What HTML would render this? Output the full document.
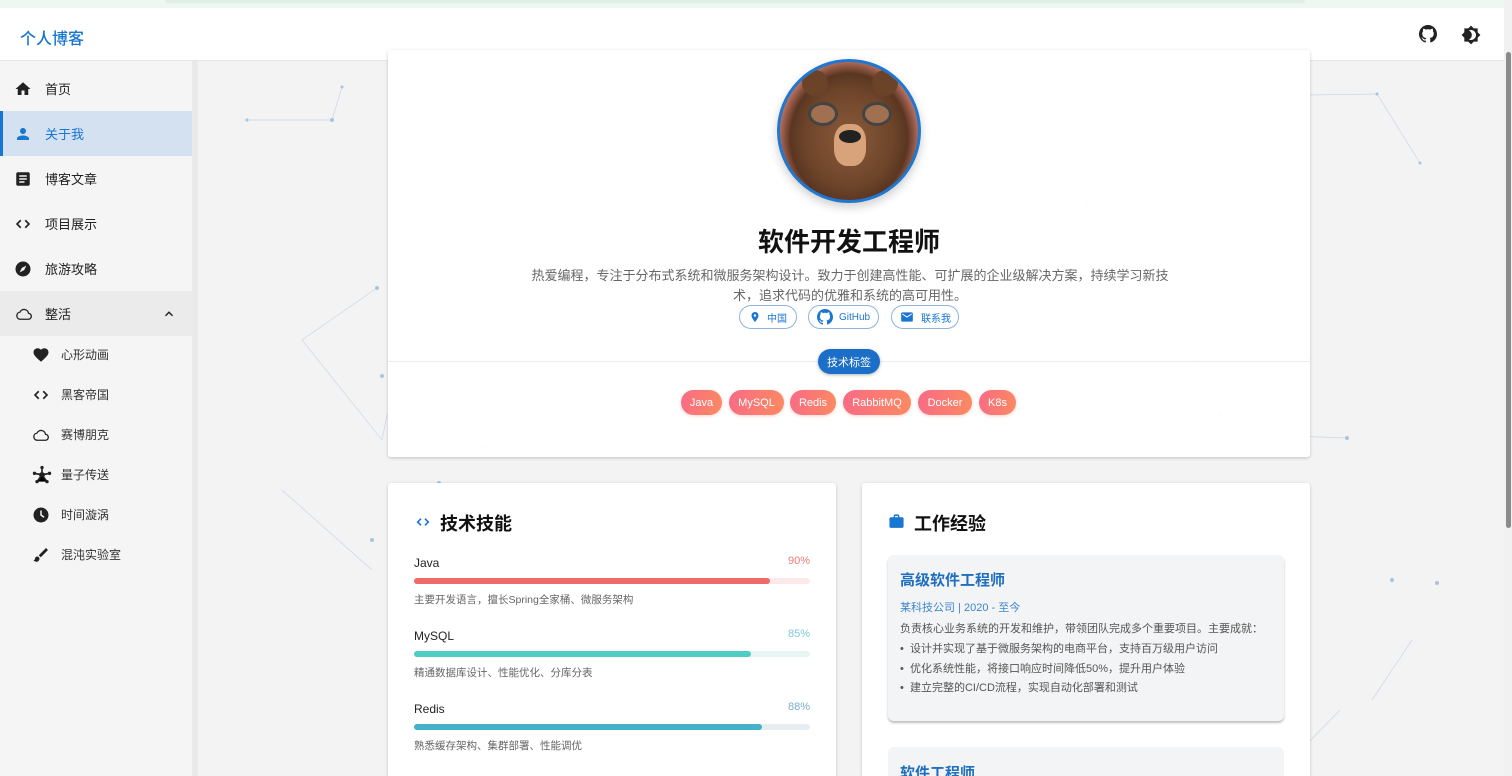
<!DOCTYPE html>
<html style="overflow:hidden;height:776px"><head><meta charset="utf-8"><style>
*{box-sizing:border-box;margin:0;padding:0}
html,body{overflow:hidden}
body{width:1512px;height:776px;overflow:hidden;background:#f3f3f4;font-family:"Liberation Sans","Noto Sans CJK SC",sans-serif;position:relative;color:#222}
.abs{position:absolute}
.top{left:0;top:0;width:1512px;height:8px;background:#eef8f2}
.top i{position:absolute;left:165px;top:0;width:1140px;height:3px;background:#dfeee6;border-radius:0 0 4px 4px}
.hdr{left:0;top:8px;width:1504px;height:53px;background:#fff;border-bottom:1px solid #e6e6e6}
.logo{left:20px;top:25px;font-size:16px;color:#1976d2;font-weight:500}
.side{left:0;top:61px;height:715px;background:#f5f5f5;border-right:6px solid #e9e9e9;width:198px}
.it{position:absolute;left:0;width:192px;height:45px;display:flex;align-items:center;font-size:13px;color:#222}
.it svg{position:absolute;left:14px}
.it span{position:absolute;left:45px}
.sub svg{left:32px}.sub span{left:61px;font-size:12px;color:#333}
.card{background:#fff;box-shadow:0 1px 3px rgba(0,0,0,.2);border-radius:3px}
.chip{position:absolute;top:305px;height:24px;border:1px solid #90b4dc;border-radius:12px;font-size:10px;color:#1976d2;display:flex;align-items:center;justify-content:center;gap:6px}
.tag{position:absolute;top:390px;height:25px;border-radius:13px;background:linear-gradient(100deg,#f86b86,#fb8a60);color:#fff;font-size:11px;display:flex;align-items:center;justify-content:center;box-shadow:0 1px 3px rgba(250,100,100,.3)}
.sk{position:absolute;left:414px;width:396px}
.sk .n{position:absolute;top:0;font-size:12px;color:#222}
.sk .p{position:absolute;right:0;top:-1px;font-size:11px}
.sk .b{position:absolute;top:22px;left:0;width:396px;height:6px;border-radius:3px}
.sk .b i{display:block;height:6px;border-radius:3px}
.sk .d{position:absolute;top:36px;font-size:10.5px;color:#666}
.exp{left:888px;top:555px;width:396px;height:166px;background:#f3f4f5;border-radius:6px;box-shadow:0 2px 2px rgba(0,0,0,.25)}
</style></head><body>
<svg class="abs" style="left:192px;top:60px" width="1312" height="716">
<g stroke="#c9d7e6" stroke-width="0.7" fill="none">
<path d="M55 60 L140 60 L150 27 M375 117 L425 82 L395 170 Z M185 228 L110 280 L190 380 L195 355 L245 330 M890 98 L1115 35 L1185 34 L1228 103 M950 160 L1088 28 M1005 300 L1030 350 L1070 375 L1155 378 M1025 355 L1065 370 M90 430 L180 510 M455 457 L530 457 L560 485 M520 520 L455 515 M1148 650 L1080 720 M1220 580 L1180 640"/>
</g>
<g fill="#a9c4e0">
<circle cx="55" cy="60" r="1.5"/><circle cx="140" cy="60" r="2"/><circle cx="150" cy="27" r="1.5"/><circle cx="375" cy="117" r="1.5"/><circle cx="425" cy="82" r="1.5"/><circle cx="185" cy="228" r="2"/><circle cx="190" cy="316" r="2"/><circle cx="247" cy="423" r="2"/><circle cx="291" cy="387" r="2"/><circle cx="570" cy="60" r="2"/><circle cx="890" cy="98" r="1.5"/><circle cx="1115" cy="35" r="2"/><circle cx="1185" cy="34" r="1.5"/><circle cx="1228" cy="103" r="1.5"/><circle cx="895" cy="145" r="2"/><circle cx="1113" cy="293" r="2"/><circle cx="1027" cy="354" r="2"/><circle cx="1155" cy="378" r="2"/><circle cx="780" cy="380" r="2"/><circle cx="180" cy="480" r="2"/><circle cx="1245" cy="523" r="2"/><circle cx="900" cy="580" r="2"/><circle cx="1200" cy="520" r="2"/>
</g></svg>
<div class="abs top"><i></i></div>
<div class="abs hdr"></div>
<div class="abs logo">个人博客</div>
<svg class="abs" style="left:1419px;top:25px" width="18" height="18" viewBox="0 0 16 16"><path fill="#222" d="M8 0C3.6 0 0 3.6 0 8c0 3.5 2.3 6.5 5.5 7.6.4.1.5-.2.5-.4v-1.4c-2.2.5-2.7-1-2.7-1-.4-.9-.9-1.2-.9-1.2-.7-.5.1-.5.1-.5.8.1 1.200.8 1.200.8.7 1.200 1.900.9 2.300.7.1-.5.3-.9.5-1.100-1.800-.2-3.600-.9-3.600-4 0-.9.3-1.600.8-2.100-.1-.2-.4-1 .1-2.100 0 0 .7-.2 2.200.8.6-.2 1.300-.3 2-.3s1.400.1 2 .3c1.500-1 2.200-.8 2.200-.8.4 1.100.2 1.900.1 2.100.5.6.8 1.300.8 2.100 0 3.100-1.900 3.700-3.600 3.900.3.3.5.8.5 1.500v2.200c0 .2.1.5.6.4C13.700 14.500 16 11.500 16 8c0-4.400-3.600-8-8-8z"/></svg>
<svg class="abs" style="left:1461px;top:25px" width="20" height="20" viewBox="0 0 24 24"><path fill="#222" d="M20 8.7V4h-4.7L12 .7 8.7 4H4v4.7L.7 12 4 15.3V20h4.7l3.3 3.3 3.3-3.3H20v-4.7l3.3-3.3L20 8.7zM12 18c-.9 0-1.8-.2-2.5-.6 2-.9 3.5-3 3.5-5.4s-1.5-4.5-3.5-5.4C10.2 6.2 11.1 6 12 6c3.3 0 6 2.7 6 6s-2.7 6-6 6z"/></svg>
<div class="abs" style="left:1504px;top:0;width:8px;height:776px;background:#f1f1f1"></div>
<div class="abs" style="left:1506px;top:52px;width:5px;height:476px;background:#8a8a8a;border-radius:3px"></div>

<div class="abs side"></div>
<div class="abs" style="left:0;top:61px;width:192px;height:715px">
<div class="it" style="top:5px"><svg width="18" height="18" viewBox="0 0 24 24"><path fill="#222" d="M10 20v-6h4v6h5v-8h3L12 3 2 12h3v8z"/></svg><span>首页</span></div>
<div class="it" style="top:50px;background:#d3e1f0;border-left:3px solid #1976d2;color:#1976d2"><svg width="18" height="18" viewBox="0 0 24 24" style="left:11px"><path fill="#1976d2" d="M12 12c2.2 0 4-1.8 4-4s-1.8-4-4-4-4 1.8-4 4 1.8 4 4 4zm0 2c-2.7 0-8 1.3-8 4v2h16v-2c0-2.7-5.3-4-8-4z"/></svg><span style="left:42px">关于我</span></div>
<div class="it" style="top:95px"><svg width="18" height="18" viewBox="0 0 24 24"><path fill="#222" d="M19 3H5c-1.1 0-2 .9-2 2v14c0 1.1.9 2 2 2h14c1.1 0 2-.9 2-2V5c0-1.1-.9-2-2-2zm-5 14H7v-2h7v2zm3-4H7v-2h10v2zm0-4H7V7h10v2z"/></svg><span>博客文章</span></div>
<div class="it" style="top:140px"><svg width="18" height="18" viewBox="0 0 24 24"><path fill="none" stroke="#222" stroke-width="2.2" d="M9 7l-5 5 5 5M15 7l5 5-5 5"/></svg><span>项目展示</span></div>
<div class="it" style="top:185px"><svg width="18" height="18" viewBox="0 0 24 24"><circle cx="12" cy="12" r="10" fill="#222"/><path fill="#f5f5f5" d="M16.5 7.5l-6 3-3 6 6-3z"/></svg><span>旅游攻略</span></div>
<div class="it" style="top:230px;background:#ebebeb"><svg width="20" height="18" viewBox="0 0 24 24"><path fill="none" stroke="#222" stroke-width="1.8" d="M6.5 19h11a4 4 0 0 0 .5-8A6 6 0 0 0 6.6 9.5 4.8 4.8 0 0 0 6.5 19z"/></svg><span>整活</span><svg width="14" height="14" viewBox="0 0 24 24" style="left:162px"><path fill="none" stroke="#222" stroke-width="2.5" d="M6 15l6-6 6 6"/></svg></div>
<div class="it sub" style="top:271px"><svg width="18" height="18" viewBox="0 0 24 24"><path fill="#222" d="M12 21l-1.5-1.3C5.4 15.1 2 12.1 2 8.4 2 5.4 4.4 3 7.4 3c1.7 0 3.4.8 4.6 2.1C13.2 3.8 14.9 3 16.6 3 19.6 3 22 5.4 22 8.4c0 3.7-3.4 6.7-8.5 11.3z"/></svg><span>心形动画</span></div>
<div class="it sub" style="top:311px"><svg width="18" height="18" viewBox="0 0 24 24"><path fill="none" stroke="#222" stroke-width="2.2" d="M9 7l-5 5 5 5M15 7l5 5-5 5"/></svg><span>黑客帝国</span></div>
<div class="it sub" style="top:351px"><svg width="20" height="18" viewBox="0 0 24 24" style="left:31px"><path fill="none" stroke="#222" stroke-width="1.8" d="M6.5 19h11a4 4 0 0 0 .5-8A6 6 0 0 0 6.6 9.5 4.8 4.8 0 0 0 6.5 19z"/></svg><span>赛博朋克</span></div>
<div class="it sub" style="top:391px"><svg width="20" height="20" viewBox="0 0 24 24"><g fill="#222"><circle cx="12" cy="12" r="3.5"/><circle cx="12" cy="3" r="2"/><circle cx="3" cy="10" r="2"/><circle cx="21" cy="10" r="2"/><circle cx="6" cy="20" r="2"/><circle cx="18" cy="20" r="2"/></g><path stroke="#222" stroke-width="2" d="M12 3v9M3 10l9 2 9-2M6 20l6-8 6 8"/></svg><span>量子传送</span></div>
<div class="it sub" style="top:431px"><svg width="18" height="18" viewBox="0 0 24 24"><circle cx="12" cy="12" r="10" fill="#222"/><path fill="none" stroke="#f5f5f5" stroke-width="2" d="M12 6v6l4 3"/></svg><span>时间漩涡</span></div>
<div class="it sub" style="top:471px"><svg width="18" height="18" viewBox="0 0 24 24"><path fill="#222" d="M20.7 4.6l-1.3-1.3c-.4-.4-1-.4-1.4 0L9 12.3l2.7 2.7 9-9c.4-.4.4-1 0-1.4zM7 14c-1.7 0-3 1.3-3 3 0 1.3-1.2 2-2 2 .9 1.2 2.5 2 4 2 2.2 0 4-1.8 4-4 0-1.7-1.3-3-3-3z"/></svg><span>混沌实验室</span></div>
</div>

<div class="abs card" style="left:388px;top:50px;width:922px;height:407px;background:rgba(255,255,255,.97)"></div>
<div class="abs" style="left:388px;top:361px;width:922px;height:1px;background:#ececec"></div>
<div class="abs" style="left:777px;top:59px;width:144px;height:144px;border-radius:50%;border:3px solid #1f77d0;background:radial-gradient(ellipse at 50% 55%,#8a5a3a 0,#6e452a 45%,#5a3622 60%,#b87060 72%,#efe2d6 80%);box-shadow:0 4px 10px rgba(0,0,0,.2);overflow:hidden">
<div style="position:absolute;left:22px;top:8px;width:26px;height:26px;background:#6b4329;border-radius:50%"></div>
<div style="position:absolute;left:92px;top:8px;width:26px;height:26px;background:#6b4329;border-radius:50%"></div>
<div style="position:absolute;left:28px;top:40px;width:30px;height:24px;border:3px solid #444;border-radius:50%;background:#a07050"></div>
<div style="position:absolute;left:82px;top:40px;width:30px;height:24px;border:3px solid #444;border-radius:50%;background:#a07050"></div>
<div style="position:absolute;left:54px;top:62px;width:32px;height:42px;background:#d8a37a;border-radius:40%"></div>
<div style="position:absolute;left:59px;top:68px;width:22px;height:13px;background:#222;border-radius:50%"></div>
</div>
<div class="abs" style="left:388px;top:222px;width:922px;text-align:center;font-size:26px;font-weight:bold;color:#111">软件开发工程师</div>
<div class="abs" style="left:530px;top:266px;width:640px;text-align:center;font-size:13px;line-height:20px;color:#666">热爱编程，专注于分布式系统和微服务架构设计。致力于创建高性能、可扩展的企业级解决方案，持续学习新技术，追求代码的优雅和系统的高可用性。</div>
<div class="chip" style="left:739px;width:58px"><svg width="12" height="14" viewBox="0 0 24 24"><path fill="#1976d2" d="M12 2C8.1 2 5 5.1 5 9c0 5.2 7 13 7 13s7-7.8 7-13c0-3.9-3.1-7-7-7zm0 9.5a2.5 2.5 0 1 1 0-5 2.5 2.5 0 0 1 0 5z"/></svg>中国</div>
<div class="chip" style="left:808px;width:71px"><svg width="16" height="16" viewBox="0 0 16 16"><path fill="#1976d2" d="M8 0C3.6 0 0 3.6 0 8c0 3.5 2.3 6.5 5.5 7.6.4.1.5-.2.5-.4v-1.4c-2.2.5-2.7-1-2.7-1-.4-.9-.9-1.2-.9-1.2-.7-.5.1-.5.1-.5.8.1 1.2.8 1.2.8.7 1.2 1.9.9 2.3.7.1-.5.3-.9.5-1.1-1.8-.2-3.6-.9-3.6-4 0-.9.3-1.6.8-2.1-.1-.2-.4-1 .1-2.1 0 0 .7-.2 2.2.8.6-.2 1.3-.3 2-.3s1.4.1 2 .3c1.5-1 2.2-.8 2.2-.8.4 1.1.2 1.9.1 2.1.5.6.8 1.3.8 2.1 0 3.1-1.9 3.7-3.6 3.9.3.3.5.8.5 1.5v2.2c0 .2.1.5.6.4C13.7 14.5 16 11.5 16 8c0-4.4-3.6-8-8-8z"/></svg>GitHub</div>
<div class="chip" style="left:891px;width:68px"><svg width="16" height="14" viewBox="0 0 24 24"><path fill="#1976d2" d="M20 4H4c-1.1 0-2 .9-2 2v12c0 1.1.9 2 2 2h16c1.1 0 2-.9 2-2V6c0-1.1-.9-2-2-2zm0 4l-8 5-8-5V6l8 5 8-5v2z"/></svg>联系我</div>
<div class="abs" style="left:818px;top:349px;width:62px;height:25px;border-radius:13px;background:#1c6fc8;color:#fff;font-size:11px;display:flex;align-items:center;justify-content:center;box-shadow:0 1px 3px rgba(0,0,0,.3)">技术标签</div>
<div class="tag" style="left:681px;width:41px">Java</div>
<div class="tag" style="left:729px;width:55px">MySQL</div>
<div class="tag" style="left:790px;width:46px">Redis</div>
<div class="tag" style="left:843px;width:68px">RabbitMQ</div>
<div class="tag" style="left:918px;width:54px">Docker</div>
<div class="tag" style="left:979px;width:37px">K8s</div>

<div class="abs card" style="left:388px;top:483px;width:448px;height:293px;border-radius:3px 3px 0 0;background:rgba(255,255,255,.96)"></div>
<svg class="abs" style="left:414px;top:514px" width="18" height="16" viewBox="0 0 24 24"><path fill="none" stroke="#1976d2" stroke-width="2.4" d="M9 7l-5 5 5 5M15 7l5 5-5 5"/></svg>
<div class="abs" style="left:440px;top:510px;font-size:18px;font-weight:bold;color:#111">技术技能</div>
<div class="sk" style="top:556px"><div class="n">Java</div><div class="p" style="color:#ef7a7a">90%</div><div class="b" style="background:#fde9e9"><i style="width:90%;background:#f06a6a"></i></div><div class="d">主要开发语言，擅长Spring全家桶、微服务架构</div></div>
<div class="sk" style="top:629px"><div class="n">MySQL</div><div class="p" style="color:#7fc8d8">85%</div><div class="b" style="background:#e7f5f3"><i style="width:85%;background:#4ecdc4"></i></div><div class="d">精通数据库设计、性能优化、分库分表</div></div>
<div class="sk" style="top:702px"><div class="n">Redis</div><div class="p" style="color:#7aaed0">88%</div><div class="b" style="background:#e6eef2"><i style="width:88%;background:#45b1c9"></i></div><div class="d">熟悉缓存架构、集群部署、性能调优</div></div>

<div class="abs card" style="left:862px;top:483px;width:448px;height:293px;border-radius:3px 3px 0 0;background:rgba(255,255,255,.96)"></div>
<svg class="abs" style="left:888px;top:513px" width="17" height="17" viewBox="0 0 24 24"><path fill="#1976d2" d="M20 6h-4V4c0-1.1-.9-2-2-2h-4c-1.1 0-2 .9-2 2v2H4c-1.1 0-2 .9-2 2v11c0 1.1.9 2 2 2h16c1.1 0 2-.9 2-2V8c0-1.1-.9-2-2-2zm-6 0h-4V4h4v2z"/></svg>
<div class="abs" style="left:914px;top:510px;font-size:18px;font-weight:bold;color:#111">工作经验</div>
<div class="abs exp"></div>
<div class="abs" style="left:900px;top:569px;font-size:15px;font-weight:bold;color:#1f6fc0">高级软件工程师</div>
<div class="abs" style="left:900px;top:599px;font-size:11px;color:#3d85cc">某科技公司 | 2020 - 至今</div>
<div class="abs" style="left:900px;top:620px;font-size:11px;color:#555">负责核心业务系统的开发和维护，带领团队完成多个重要项目。主要成就：</div>
<div class="abs" style="left:900px;top:640px;font-size:11px;color:#555;line-height:19.5px">• &nbsp;设计并实现了基于微服务架构的电商平台，支持百万级用户访问<br>• &nbsp;优化系统性能，将接口响应时间降低50%，提升用户体验<br>• &nbsp;建立完整的CI/CD流程，实现自动化部署和测试</div>
<div class="abs" style="left:888px;top:747px;width:396px;height:29px;background:#f3f4f5;border-radius:6px 6px 0 0"></div>
<div class="abs" style="left:900px;top:762px;font-size:15px;font-weight:bold;color:#1f6fc0">软件工程师</div>
</body></html>
